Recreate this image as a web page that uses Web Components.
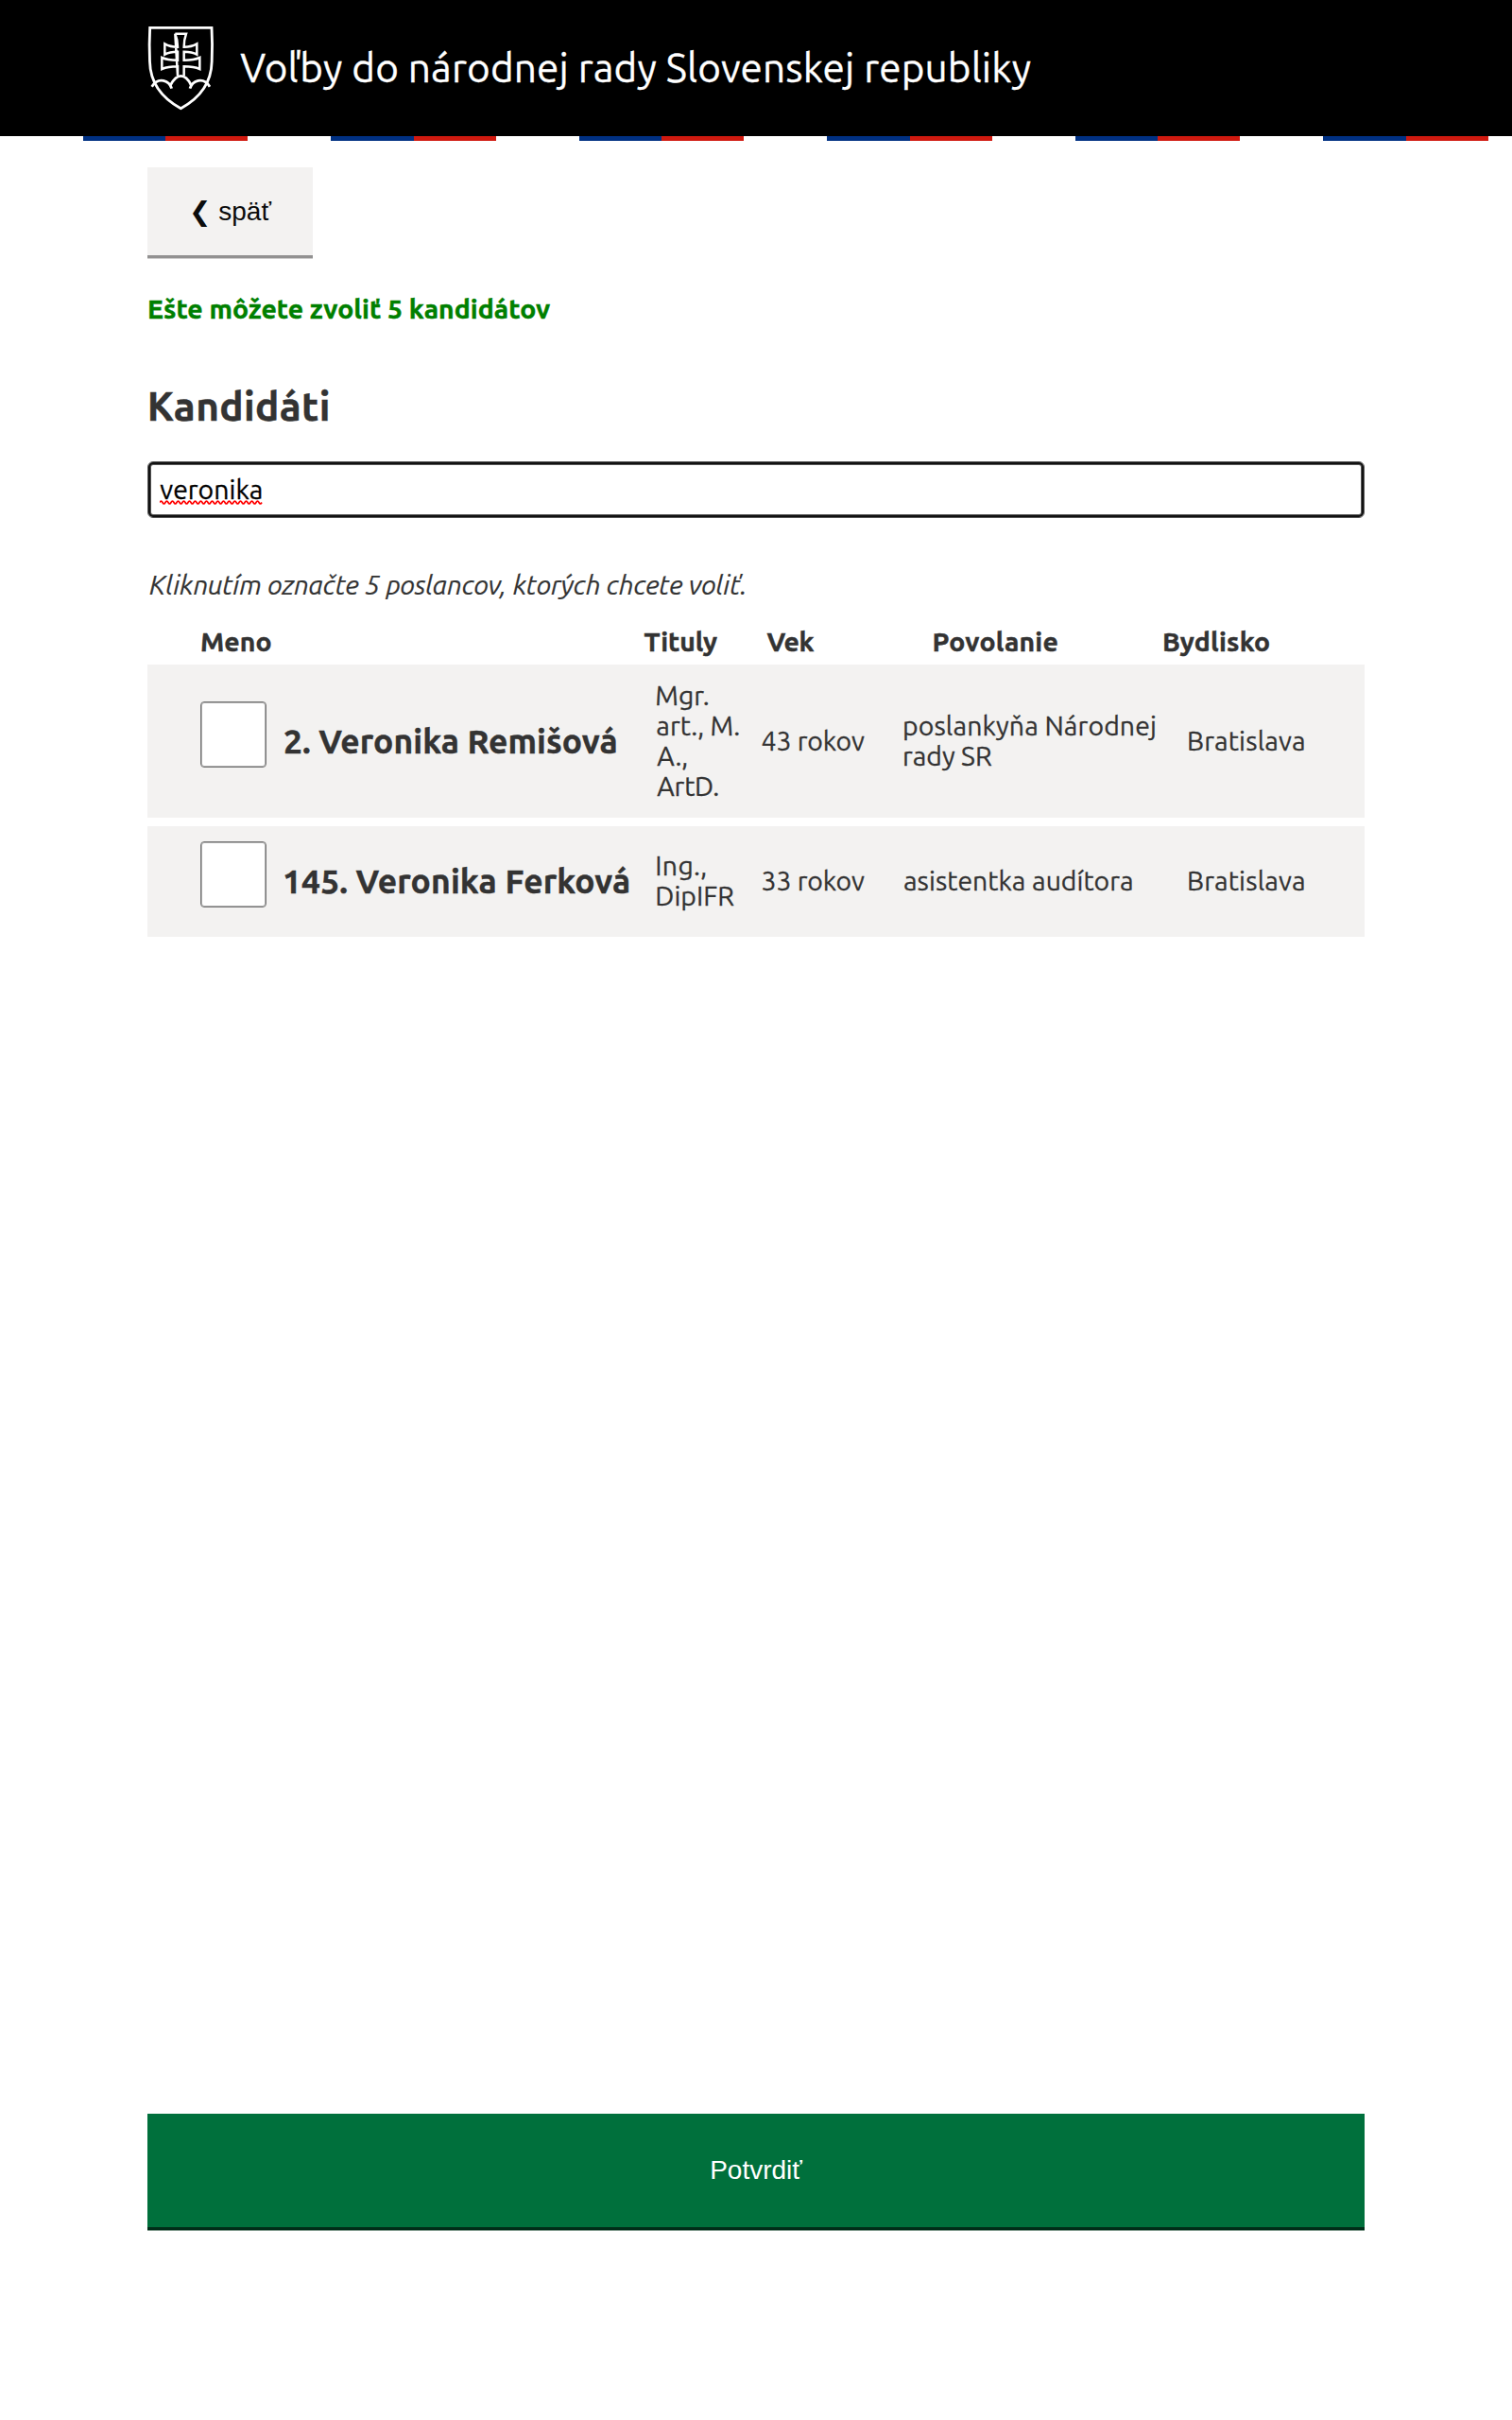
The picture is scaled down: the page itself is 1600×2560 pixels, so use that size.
<!DOCTYPE html>
<html lang="sk">
<head>
<meta charset="utf-8">
<title>Voľby do národnej rady Slovenskej republiky</title>
<style>
body{margin:0;background:#fff;color:#333;font-family:Ubuntu,"Noto Sans",sans-serif;font-size:28.400px;line-height:32px}
</style>
</head>
<body>
<election-page></election-page>
<script>
const define = (name, html, setup) => customElements.define(name, class extends HTMLElement {
  connectedCallback() {
    if (this.shadowRoot) return;
    const t = document.createElement('template');
    t.innerHTML = html;
    this.attachShadow({mode: 'open'}).append(t.content.cloneNode(true));
    if (setup) setup(this, this.shadowRoot);
  }
});

// A single line of text tracked so that its ink spans the width given in "w".
const pen = document.createElement('canvas').getContext('2d');
define('text-run', `<style>:host{display:block;white-space:nowrap;-webkit-text-stroke:.3px currentColor}:host([strong]){-webkit-text-stroke-width:.45px}span{display:inline-block}</style><span><slot></slot></span>`, (el, root) => {
  const span = root.querySelector('span');
  const cs = getComputedStyle(span), s = el.textContent;
  pen.font = `${cs.fontStyle} ${cs.fontWeight} ${cs.fontSize} ${cs.fontFamily}`;
  const m = pen.measureText(s);
  const bearings = m.width - m.actualBoundingBoxLeft - m.actualBoundingBoxRight;
  const ink = span.getBoundingClientRect().width - bearings;
  span.style.letterSpacing = (+el.getAttribute('w') - ink) / (s.length - 1) + 'px';
  span.style.marginLeft = m.actualBoundingBoxLeft + 'px';
});

define('state-emblem', `<style>:host{display:block;width:71px;height:90px}svg{display:block}</style>
<svg width="71" height="90" viewBox="48 51 213 270" fill="none" stroke="#fff" stroke-width="8.500">
<path d="M56 58H252Q255 110 252.500 165C251 235 213 282 154 314C95 282 57 235 55.500 165Q53 110 56 58Z"/>
<path stroke-width="7.500" d="M136 77H171C166 91 164 106 164 119C179 119 193 116 205 109V143C193 136 180 134 164 134V161C184 161 201 159 214 153V189C201 183 183 181 164 181V210M144 210V181C125 181 108 183 94 189V153C107 159 125 161 144 161V134C128 134 115 136 103 143V109C115 116 129 119 144 119C144 106 142 91 136 77Z"/>
<path stroke-width="8.500" d="M62 245C72 229 85 223 99 226C111 229 121 237 125 251M122 239C131 222 140 211 154 211C168 211 178 222 186 239M183 251C187 237 197 229 209 226C223 223 236 229 246 245"/>
</svg>`);

define('flag-strip', `<style>:host{display:block;height:5px;background:repeating-linear-gradient(90deg,#fff 0 87.8px,#003082 87.8px 175px,#d0190f 175px 262.5px)}</style>`);

define('site-header', `<style>
:host{display:block}
header{display:flex;align-items:center;height:144px;background:#000;color:#fff;padding:0 156px;box-sizing:border-box;gap:27.300px}
text-run{font-size:42.300px;line-height:50px}
</style>
<header><state-emblem></state-emblem><text-run w="836.500">Voľby do národnej rady Slovenskej republiky</text-run></header><flag-strip></flag-strip>`);

define('action-button', `<style>
:host{display:block}
button{display:block;box-sizing:border-box;width:100%;height:93px;padding:0;border:0;background:#f3f2f1;color:#0b0c0c;font:28px/32px "Liberation Sans","DejaVu Sans",sans-serif;box-shadow:0 3px 0 #929191,0 4px 0 #cfcece}
:host([primary]) button{height:120px;background:#00703c;color:#fff;box-shadow:0 3px 0 #002d18,0 4px 0 #819a8e}
</style><button><slot></slot></button>`);

define('search-field', `<style>
:host{display:block;position:relative;box-sizing:border-box;height:60px;border:1px solid #555;border-radius:6px;padding:13px 12.300px;color:#000;background:#fff;box-shadow:inset 0 0 0 2px #111,inset 0 0 0 3px #555}
svg{position:absolute;left:12px;top:39.500px}
</style><text-run w="107.500">veronika</text-run>
<svg width="109" height="5" fill="none" stroke="red" stroke-width="1.700"><path d="M0 2.500q1.500 -2.800 3 0${'t3 0'.repeat(35)}"/></svg>`);

define('table-head', `<style>
:host{display:grid;grid-template-columns:468.500px 130px 177px 243.500px 120px;padding-left:57px;font-weight:700}
</style>
<text-run strong w="73.500">Meno</text-run><text-run strong w="77.500">Tituly</text-run><text-run strong w="50">Vek</text-run><text-run strong w="130">Povolanie</text-run><text-run strong w="111">Bydlisko</text-run>`);

define('check-box', `<style>:host{display:block;box-sizing:border-box;width:70px;height:70px;border:1px solid #767676;border-radius:4px;background:#fff;box-shadow:inset 0 0 0 1px #aaa;margin-bottom:14px}</style>`);

define('candidate-row', `<style>
:host{display:grid;grid-template-columns:89px 394.300px 111.200px 150.500px 301px 130px;align-items:center;box-sizing:border-box;background:#f3f2f1;padding-left:56px}
.name{font-size:35.400px;font-weight:700;line-height:40px}
</style>
<check-box></check-box><div class="name"><slot name="name"></slot></div><div><slot name="titles"></slot></div><div><slot name="age"></slot></div><div><slot name="job"></slot></div><div><slot name="town"></slot></div>`);

define('election-page', `<style>
:host{display:flex;flex-direction:column;height:2560px;background:#fff}
main{flex:1;display:flex;flex-direction:column;padding:28px 156px 204px}
.back{width:175px}
.left{color:green;font-weight:700;line-height:40px;margin:37px 0 0 2px}
h1{font-size:42.300px;font-weight:700;line-height:50px;margin:58px 0 33px 2.700px}
.hint{font-style:italic;-webkit-text-stroke-width:.2px;margin:55px 0 28px 2px}
table-head{margin-bottom:8px}
.r1{height:162px;margin-bottom:9px}
.r2{height:117px;padding-bottom:1px}
.ok{margin-top:auto}
.n{font-size:35.400px;font-weight:700}
</style>
<site-header></site-header>
<main>
<action-button class="back">❮ späť</action-button>
<text-run strong class="left" w="424">Ešte môžete zvoliť 5 kandidátov</text-run>
<h1><text-run strong w="189">Kandidáti</text-run></h1>
<search-field></search-field>
<text-run class="hint" w="629.500">Kliknutím označte 5 poslancov, ktorých chcete voliť.</text-run>
<table-head></table-head>
<candidate-row class="r1">
<text-run strong slot="name" class="n" w="350.500">2. Veronika Remišová</text-run>
<text-run slot="titles" w="54.500">Mgr.</text-run><text-run slot="titles" w="87">art., M.</text-run><text-run slot="titles" w="31">A.,</text-run><text-run slot="titles" w="65">ArtD.</text-run>
<text-run slot="age" w="108.500">43 rokov</text-run>
<text-run slot="job" w="265">poslankyňa Národnej</text-run><text-run slot="job" w="93">rady SR</text-run>
<text-run slot="town" w="122">Bratislava</text-run>
</candidate-row>
<candidate-row class="r2">
<text-run strong slot="name" class="n" w="364">145. Veronika Ferková</text-run>
<text-run slot="titles" w="51">Ing.,</text-run><text-run slot="titles" w="82">DipIFR</text-run>
<text-run slot="age" w="108.500">33 rokov</text-run>
<text-run slot="job" w="241">asistentka audítora</text-run>
<text-run slot="town" w="122">Bratislava</text-run>
</candidate-row>
<action-button primary class="ok">Potvrdiť</action-button>
</main>`);
</script>
</body>
</html>
